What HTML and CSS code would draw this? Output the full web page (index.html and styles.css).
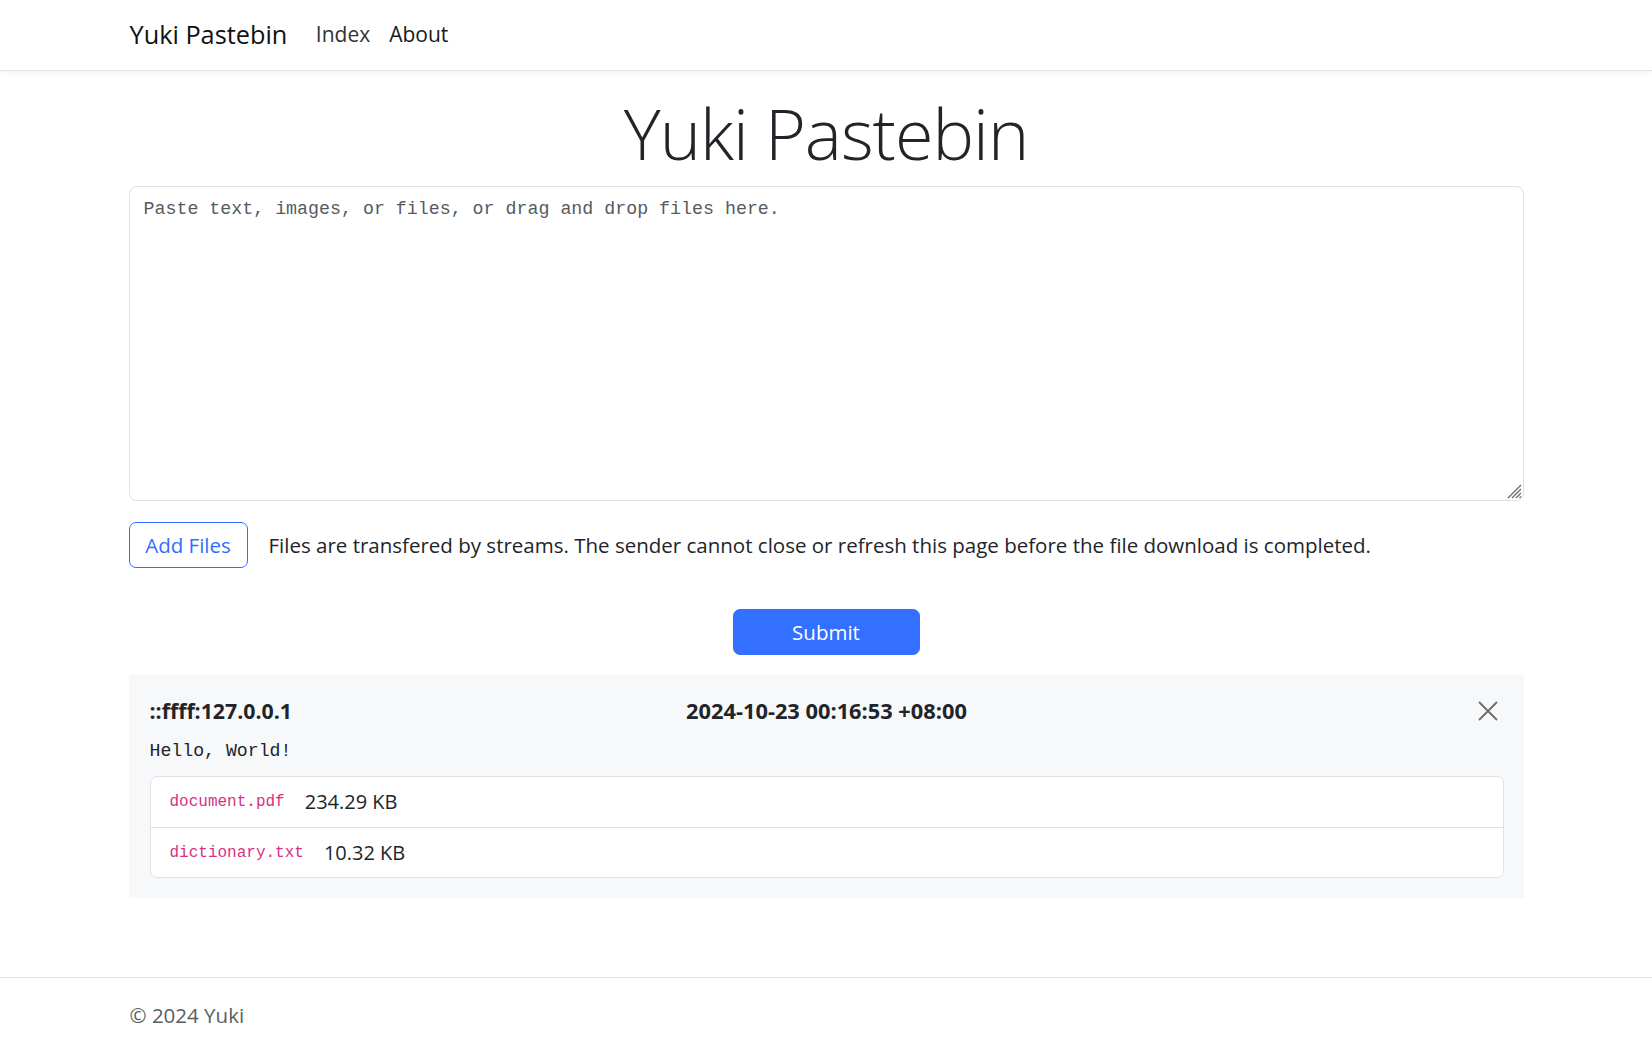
FILE: index.html
```html
<!DOCTYPE html>
<html lang="en">
<head>
<meta charset="utf-8">
<title>Yuki Pastebin</title>
<link rel="stylesheet" href="styles.css">
</head>
<body>
<header class="navbar">
  <div class="container nav-inner">
    <a class="brand" href="#">Yuki Pastebin</a>
    <nav class="nav">
      <a class="nav-link" href="#">Index</a>
      <a class="nav-link active" href="#">About</a>
    </nav>
  </div>
</header>
<main class="container main">
  <h1 class="title">Yuki Pastebin</h1>
  <div class="paste-wrap">
    <textarea class="paste" placeholder="Paste text, images, or files, or drag and drop files here."></textarea>
    <svg class="grip" width="18" height="18" viewBox="0 0 18 18" aria-hidden="true">
      <path d="M17 4L4 17M17 8L8 17M17 12L12 17M17 15.5L15.5 17" stroke="#6a6a6a" stroke-width="1.3" fill="none"/>
    </svg>
  </div>
  <div class="file-row">
    <button class="btn btn-outline" type="button">Add Files</button>
    <span class="help">Files are transfered by streams. The sender cannot close or refresh this page before the file download is completed.</span>
  </div>
  <div class="submit-row">
    <button class="btn btn-primary" type="button">Submit</button>
  </div>
  <section class="paste-card">
    <div class="card-head">
      <strong class="ip">::ffff:127.0.0.1</strong>
      <strong class="date">2024-10-23 00:16:53 +08:00</strong>
      <button class="close" type="button" aria-label="Close">
        <svg width="20" height="20" viewBox="0 0 20 20"><path d="M1 1L19 19M19 1L1 19" stroke="#6c6c6c" stroke-width="1.8" fill="none"/></svg>
      </button>
    </div>
    <pre class="content">Hello, World!</pre>
    <ul class="files">
      <li class="file"><code class="fname">document.pdf</code><span class="fsize">234.29 KB</span></li>
      <li class="file"><code class="fname">dictionary.txt</code><span class="fsize">10.32 KB</span></li>
    </ul>
  </section>
</main>
<footer class="footer">
  <div class="container footer-inner">© 2024 Yuki</div>
</footer>
</body>
</html>
```

FILE: styles.css
```css
* { box-sizing: border-box; }

body {
  margin: 0;
  font-family: "Open Sans", "Noto Sans", sans-serif;
  font-size: 20.5px;
  line-height: 1.5;
  color: #212529;
  background: #fff;
}

.container {
  max-width: 1395px;
  margin: 0 auto;
}

.navbar {
  height: 71px;
  border-bottom: 1px solid #e3e4e8;
  box-shadow: 0 2px 6px rgba(0, 0, 0, 0.05);
}

.nav-inner {
  height: 70px;
  display: flex;
  align-items: center;
}

.brand {
  font-size: 25.3px;
  color: #111;
  text-decoration: none;
  margin-left: 1px;
  margin-right: 19px;
}

.nav {
  display: flex;
}

.nav-link {
  padding: 0 9.5px;
  font-size: 21px;
  color: #333;
  text-decoration: none;
}

.nav-link.active {
  color: #1a1a1a;
}

.main {
  padding-bottom: 79px;
}

.title {
  margin: 19.5px 0 11.5px;
  text-align: center;
  font-size: 70px;
  font-weight: 300;
  letter-spacing: -1px;
  line-height: 1.2;
}

.paste-wrap {
  position: relative;
}

.paste {
  display: block;
  width: 100%;
  height: 315px;
  padding: 9px 14px;
  border: 1px solid #dee2e6;
  border-radius: 8px;
  font-family: "Liberation Mono", monospace;
  font-size: 18.3px;
  line-height: 1.5;
  color: #212529;
  resize: none;
}

.paste::placeholder {
  color: #555b61;
}

.grip {
  position: absolute;
  right: 2px;
  bottom: 2px;
  pointer-events: none;
}

.file-row {
  display: flex;
  align-items: center;
  gap: 21px;
  margin-top: 21px;
}

.btn {
  font-family: inherit;
  font-size: 20.5px;
  height: 46px;
  border-radius: 7px;
  cursor: pointer;
}

.btn-outline {
  width: 119px;
  background: #fff;
  color: #2f6fff;
  border: 1px solid #2f6fff;
}

.help {
  font-size: 20.5px;
}

.submit-row {
  display: flex;
  justify-content: center;
  margin-top: 41px;
}

.btn-primary {
  width: 187px;
  background: #3370ff;
  color: #fff;
  border: 1px solid #3370ff;
}

.paste-card {
  margin-top: 20px;
  padding: 20px 20px 20px 21px;
  background: #f7f8fa;
}

.card-head {
  display: grid;
  grid-template-columns: 1fr auto 1fr;
  align-items: center;
  height: 32px;
}

.ip {
  font-weight: 700;
  font-size: 21.3px;
}

.date {
  font-weight: 700;
  font-size: 21.8px;
}

.close {
  justify-self: end;
  width: 32px;
  height: 32px;
  padding: 0;
  border: 0;
  background: transparent;
  display: flex;
  align-items: center;
  justify-content: center;
  cursor: pointer;
}

.content {
  margin: 11px 0 11px;
  font-family: "Liberation Mono", monospace;
  font-size: 18.2px;
  line-height: 27px;
}

.files {
  list-style: none;
  margin: 0;
  padding: 0;
  background: #fff;
  border: 1px solid #dee2e6;
  border-radius: 7px;
}

.file {
  display: flex;
  align-items: center;
  gap: 20px;
  height: 50px;
  padding: 0 19px;
}

.file + .file {
  border-top: 1px solid #dee2e6;
}

.fname {
  font-family: "Liberation Mono", monospace;
  font-size: 16px;
  color: #d63384;
}

.fsize {
  font-size: 20px;
}

.footer {
  border-top: 1px solid #e3e4e8;
}

.footer-inner {
  padding: 22px 0 20px 1px;
  color: #5a5e62;
  font-size: 20.5px;
}
```
